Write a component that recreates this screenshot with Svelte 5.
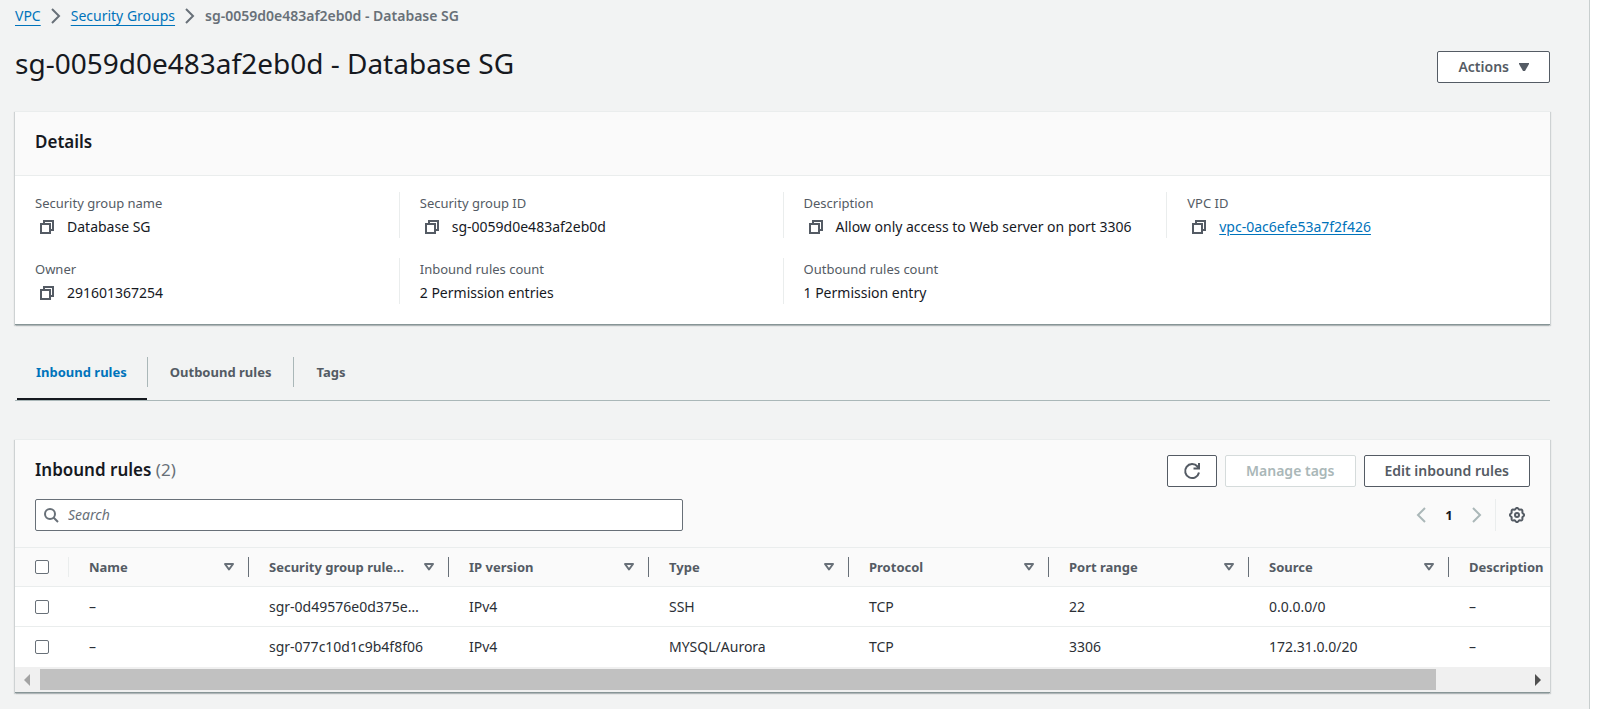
<script>
  const tabs = ['Inbound rules', 'Outbound rules', 'Tags'];
  let activeTab = $state('Inbound rules');
  let query = $state('');

  const details = [
    { label: 'Security group name', value: 'Database SG', copy: true },
    { label: 'Security group ID', value: 'sg-0059d0e483af2eb0d', copy: true },
    { label: 'Description', value: 'Allow only access to Web server on port 3306', copy: true },
    { label: 'VPC ID', value: 'vpc-0ac6efe53a7f2f426', copy: true, link: true },
    { label: 'Owner', value: '291601367254', copy: true },
    { label: 'Inbound rules count', value: '2 Permission entries' },
    { label: 'Outbound rules count', value: '1 Permission entry' }
  ];

  const columns = ['Name', 'Security group rule…', 'IP version', 'Type', 'Protocol', 'Port range', 'Source', 'Description'];
  const rows = [
    ['–', 'sgr-0d49576e0d375e…', 'IPv4', 'SSH', 'TCP', '22', '0.0.0.0/0', '–'],
    ['–', 'sgr-077c10d1c9b4f8f06', 'IPv4', 'MYSQL/Aurora', 'TCP', '3306', '172.31.0.0/20', '–']
  ];

  // Eight-lobed outline of the preferences gear, centred in a 16-unit box.
  const gearPoints = Array.from({ length: 96 }, (_, i) => {
    const angle = (i / 96) * Math.PI * 2;
    const radius = 6.5 + 0.6 * Math.cos(8 * angle);
    return `${(8 + radius * Math.cos(angle)).toFixed(2)},${(8 + radius * Math.sin(angle)).toFixed(2)}`;
  }).join(' ');
</script>

{#snippet chevron()}
  <svg class="chevron" width="16" height="16" viewBox="0 0 16 16" aria-hidden="true"><path d="M4 1l7 7-7 7" /></svg>
{/snippet}

<main class="page">
  <nav class="breadcrumb" aria-label="Breadcrumb">
    <a href="#vpc">VPC</a>
    {@render chevron()}
    <a href="#groups">Security Groups</a>
    {@render chevron()}
    <span class="current">sg-0059d0e483af2eb0d - Database SG</span>
  </nav>

  <header class="title-row">
    <h1>sg-0059d0e483af2eb0d - Database SG</h1>
    <button class="btn" type="button">
      Actions
      <svg class="caret" width="10" height="8" viewBox="0 0 10 8" aria-hidden="true"><path d="M0 0h10v1L6 8H4L0 1z" /></svg>
    </button>
  </header>

  <section class="panel">
    <h2 class="details-title">Details</h2>
    <dl class="details">
      {#each details as item}
        <div class="field">
          <dt>{item.label}</dt>
          <dd>
            {#if item.copy}
              <button class="copy" type="button" aria-label="Copy">
                <svg width="16" height="16" viewBox="0 0 16 16" aria-hidden="true"><path d="M2 5h9v9H2zM5 5V2h9v9h-3" /></svg>
              </button>
            {/if}
            {#if item.link}<a href="#vpc-id">{item.value}</a>{:else}<span>{item.value}</span>{/if}
          </dd>
        </div>
      {/each}
    </dl>
  </section>

  <div class="tabs" role="tablist">
    {#each tabs as tab}
      <div class="tab" class:active={activeTab === tab} role="presentation">
        <button type="button" role="tab" aria-selected={activeTab === tab} onclick={() => (activeTab = tab)}>{tab}</button>
      </div>
    {/each}
  </div>

  <section class="panel">
    <div class="tools">
      <div class="tool-row">
        <h2>Inbound rules <span class="count">(2)</span></h2>
        <div class="actions">
          <button class="btn icon-btn" type="button" aria-label="Refresh">
            <svg width="18" height="18" viewBox="0 0 18 18" aria-hidden="true"><path d="M16 10.500A7 7 0 1 1 14.500 4.500L16 6M16 1v5.500h-5.500" /></svg>
          </button>
          <button class="btn" type="button" disabled>Manage tags</button>
          <button class="btn" type="button">Edit inbound rules</button>
        </div>
      </div>
      <div class="tool-row">
        <label class="search">
          <svg width="16" height="16" viewBox="0 0 16 16" aria-hidden="true"><circle cx="7" cy="7" r="5" /><path d="M10.500 10.500l4.500 4.500" /></svg>
          <input type="search" placeholder="Search" aria-label="Search" bind:value={query} />
        </label>
        <div class="pager">
          <button type="button" class="page-step" aria-label="Previous page" disabled>
            <svg width="16" height="16" viewBox="0 0 16 16" aria-hidden="true"><path d="M12 1L5 8l7 7" /></svg>
          </button>
          <button type="button" class="page-number">1</button>
          <button type="button" class="page-step" aria-label="Next page" disabled>
            <svg width="16" height="16" viewBox="0 0 16 16" aria-hidden="true"><path d="M4 1l7 7-7 7" /></svg>
          </button>
          <button type="button" class="settings" aria-label="Preferences">
            <svg width="16" height="16" viewBox="0 0 16 16" aria-hidden="true">
              <polygon points={gearPoints} />
              <circle cx="8" cy="8" r="2" />
            </svg>
          </button>
        </div>
      </div>
    </div>

    <div class="table-wrap">
      <table>
        <colgroup>
          <col class="col-check" />
          <col class="col-name" />
          {#each columns.slice(1) as _}<col class="col-data" />{/each}
        </colgroup>
        <thead>
          <tr>
            <th><input type="checkbox" aria-label="Select all rules" /></th>
            {#each columns as column}
              <th scope="col">
                <div class="head-cell">
                  <span>{column}</span>
                  <svg width="16" height="16" viewBox="0 0 16 16" aria-hidden="true"><path d="M4 5h8l-4 5.500z" /></svg>
                </div>
              </th>
            {/each}
          </tr>
        </thead>
        <tbody>
          {#each rows as row}
            <tr>
              <td><input type="checkbox" aria-label={'Select ' + row[1]} /></td>
              {#each row as cell}<td>{cell}</td>{/each}
            </tr>
          {/each}
        </tbody>
      </table>
    </div>
    <div class="scrollbar" aria-hidden="true">
      <svg class="off" width="6" height="12" viewBox="0 0 6 12"><path d="M6 0v12L0 6z" /></svg>
      <div class="track"><div class="thumb"></div></div>
      <svg width="6" height="12" viewBox="0 0 6 12"><path d="M0 0v12l6-6z" /></svg>
    </div>
  </section>
</main>

<style>
  :global(body) { margin: 0; background: #fff; }

  .page {
    box-sizing: border-box;
    min-height: 100vh;
    margin-right: 13px;
    padding: 6px 39px 16px 15px;
    border-right: 1px solid #c8cece;
    background: #f2f3f3;
    color: #16191f;
    font: 14px/20px "Noto Sans", "Open Sans", sans-serif;
  }
  button, input { font: inherit; color: inherit; }
  button { padding: 0; border: 0; background: none; cursor: pointer; }
  h1, h2, dl, dd { margin: 0; }
  svg { display: block; flex: none; fill: none; stroke: #545b64; stroke-width: 2; }
  a { color: #0073bb; text-underline-offset: 2px; }

  .breadcrumb { display: flex; align-items: center; gap: 7px; }
  .breadcrumb a { text-underline-offset: 4px; }
  .breadcrumb .current { color: #687078; font-weight: 600; }
  .chevron { stroke: #687078; }

  .title-row {
    display: flex;
    justify-content: space-between;
    align-items: flex-end;
    margin: 19px 0 28px;
  }
  h1 { padding-bottom: 2px; font-size: 28px; line-height: 36px; font-weight: 400; }
  h2 { font-size: 17px; line-height: 22px; font-weight: 600; }

  .btn {
    display: flex;
    align-items: center;
    justify-content: center;
    gap: 10px;
    box-sizing: border-box;
    height: 32px;
    padding: 0 20px;
    border: 1px solid #545b64;
    border-radius: 2px;
    background: #fff;
    color: #545b64;
    font-weight: 600;
    white-space: nowrap;
  }
  .btn:disabled { border-color: #d5dbdb; color: #aab7b8; cursor: default; }
  .icon-btn { padding: 0 15px; }
  .caret { fill: #545b64; stroke: none; }

  .panel {
    border-top: 1px solid #eaeded;
    border-bottom: 1px solid #879596;
    background: #fff;
    box-shadow: 1px 1px 1px rgba(0, 28, 36, 0.15), -1px 1px 1px rgba(0, 28, 36, 0.15);
  }
  .details-title {
    padding: 19px 20px 22px;
    border-bottom: 1px solid #eaeded;
    background: #fafafa;
  }
  .details {
    display: grid;
    grid-template-columns: repeat(4, 1fr);
    row-gap: 20px;
    padding: 16px 0 20px;
  }
  .field { height: 46px; padding-left: 20px; border-left: 1px solid #eaeded; }
  .field:nth-child(4n + 1) { border-left-color: transparent; margin-left: -1px; }
  dt { color: #545b64; font-size: 13px; line-height: 22px; }
  dd { display: flex; align-items: center; line-height: 26px; }
  .copy { padding: 0 12px 0 4px; }

  .tabs {
    display: flex;
    margin: 25px 0 38px;
    padding-left: 2px;
    border-bottom: 1px solid #aab7b8;
    font-size: 13px;
  }
  .tab { padding: 7px 0 13px; }
  .tab.active { box-shadow: inset 0 -2px #16191f; }
  .tab button {
    height: 30px;
    padding: 0 22px;
    color: #545b64;
    font-weight: 700;
  }
  .tab:first-child button { padding: 0 20px 0 19px; }
  .tab + .tab button { border-left: 1px solid #aab7b8; }
  .tab.active button { color: #0073bb; }

  .tools {
    display: grid;
    gap: 12px;
    padding: 15px 20px 16px;
    background: #fafafa;
  }
  .tool-row { display: flex; justify-content: space-between; align-items: center; gap: 16px; }
  .tool-row h2 { padding-bottom: 2px; }
  .count { color: #687078; font-weight: 400; }
  .actions { display: flex; gap: 8px; }

  .search {
    display: flex;
    align-items: center;
    gap: 9px;
    flex: 0 1 648px;
    box-sizing: border-box;
    height: 32px;
    padding: 0 7px;
    border: 1px solid #687078;
    border-radius: 2px;
    background: #fff;
  }
  .search svg { stroke: #687078; }
  .search input { flex: 1; min-width: 0; padding: 0; border: 0; outline: 0; background: none; }
  .search input::placeholder { color: #687078; font-style: italic; opacity: 1; }

  .pager { display: flex; align-items: center; height: 32px; }
  .page-step svg { stroke: #aab7b8; }
  .page-number { width: 40px; font-size: 13px; font-weight: 700; }
  .settings {
    display: flex;
    align-items: center;
    height: 32px;
    margin-left: 10px;
    padding: 0 5px 0 13px;
    border-left: 1px solid #eaeded;
  }

  .table-wrap { overflow: hidden; }
  table { width: 1634px; min-width: 100%; table-layout: fixed; border-collapse: separate; border-spacing: 0; }
  .col-check { width: 54px; }
  .col-name { width: 180px; }
  .col-data { width: 200px; }
  th, td { box-sizing: border-box; padding: 0 20px; text-align: left; white-space: nowrap; }
  th {
    height: 40px;
    padding-right: 0;
    border-top: 1px solid #eaeded;
    border-bottom: 1px solid #eaeded;
    background: #fafafa;
    color: #545b64;
    font-size: 13px;
    font-weight: 700;
  }
  td { height: 40px; border-bottom: 1px solid #eaeded; color: #2b2f36; }
  tbody tr:last-child td { border-bottom-color: #fff; }
  .head-cell {
    display: flex;
    align-items: center;
    justify-content: space-between;
    padding-right: 11px;
    border-right: 1px solid #687078;
  }
  .head-cell svg { stroke: #687078; stroke-linejoin: round; }
  th:first-child { background: linear-gradient(#eaeded, #eaeded) right center / 1px 20px no-repeat #fafafa; }
  input[type="checkbox"] {
    display: block;
    appearance: none;
    box-sizing: border-box;
    width: 14px;
    height: 14px;
    margin: 0;
    border: 1px solid #687078;
    border-radius: 2px;
    background: #fff;
  }
  input[type="checkbox"]:checked { background: #0073bb; }

  .scrollbar {
    display: flex;
    align-items: center;
    gap: 10px;
    height: 25px;
    padding: 0 9px;
    background: #f0f0f0;
  }
  .scrollbar svg { fill: #505050; stroke: none; }
  .scrollbar .off { fill: #a3a3a3; }
  .track { flex: 1; }
  .thumb { width: 94%; height: 21px; background: #c1c1c1; }
</style>
